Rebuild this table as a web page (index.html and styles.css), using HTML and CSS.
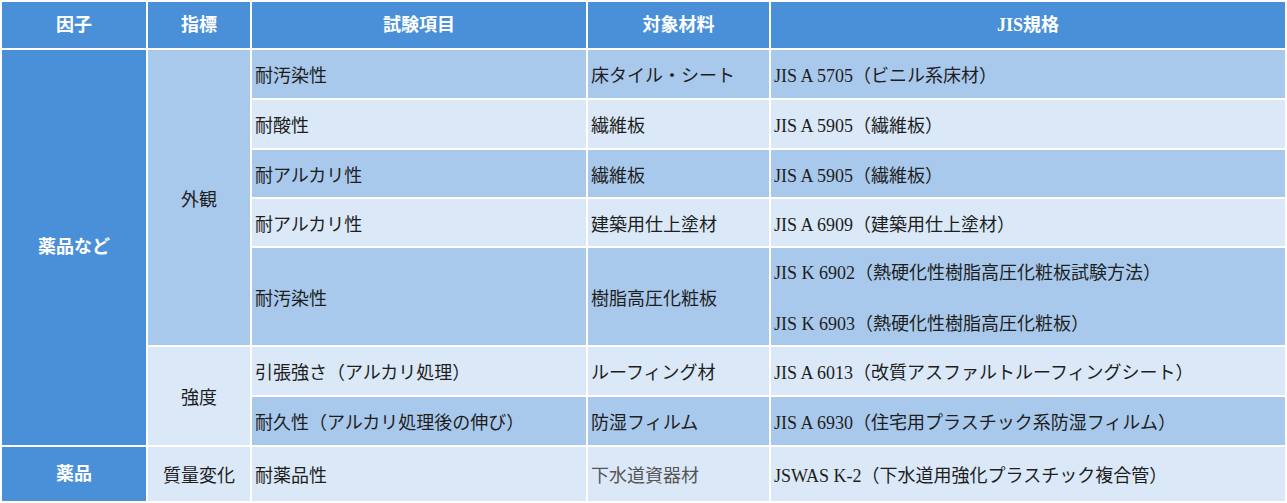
FILE: index.html
```html
<!DOCTYPE html>
<html lang="ja">
<head>
<meta charset="utf-8">
<title>JIS規格一覧</title>
<link rel="stylesheet" href="styles.css">
</head>
<body>
<table class="spec">
  <colgroup>
    <col class="c1">
    <col class="c2">
    <col class="c3">
    <col class="c4">
    <col class="c5">
  </colgroup>
  <thead>
    <tr class="h-head">
      <th>因子</th>
      <th>指標</th>
      <th>試験項目</th>
      <th>対象材料</th>
      <th>JIS規格</th>
    </tr>
  </thead>
  <tbody>
    <tr class="h48 mid">
      <td class="factor" rowspan="7">薬品など</td>
      <td class="index mid" rowspan="5">外観</td>
      <td>耐汚染性</td>
      <td>床タイル・シート</td>
      <td>JIS A 5705（ビニル系床材）</td>
    </tr>
    <tr class="h48 light">
      <td>耐酸性</td>
      <td>繊維板</td>
      <td>JIS A 5905（繊維板）</td>
    </tr>
    <tr class="h47 mid">
      <td>耐アルカリ性</td>
      <td>繊維板</td>
      <td>JIS A 5905（繊維板）</td>
    </tr>
    <tr class="h47 light">
      <td>耐アルカリ性</td>
      <td>建築用仕上塗材</td>
      <td>JIS A 6909（建築用仕上塗材）</td>
    </tr>
    <tr class="h97 mid">
      <td>耐汚染性</td>
      <td>樹脂高圧化粧板</td>
      <td>
        <div class="line">JIS K 6902（熱硬化性樹脂高圧化粧板試験方法）</div>
        <div class="line second">JIS K 6903（熱硬化性樹脂高圧化粧板）</div>
      </td>
    </tr>
    <tr class="h48 light">
      <td class="index light" rowspan="2">強度</td>
      <td>引張強さ（アルカリ処理）</td>
      <td>ルーフィング材</td>
      <td>JIS A 6013（改質アスファルトルーフィングシート）</td>
    </tr>
    <tr class="h48 mid">
      <td>耐久性（アルカリ処理後の伸び）</td>
      <td>防湿フィルム</td>
      <td>JIS A 6930（住宅用プラスチック系防湿フィルム）</td>
    </tr>
    <tr class="h54 light">
      <td class="factor">薬品</td>
      <td class="index">質量変化</td>
      <td>耐薬品性</td>
      <td class="muted">下水道資器材</td>
      <td>JSWAS K-2（下水道用強化プラスチック複合管）</td>
    </tr>
  </tbody>
</table>
</body>
</html>
```

FILE: styles.css
```css
html, body {
  margin: 0;
  padding: 0;
  background: #ffffff;
}

.spec {
  width: 1287px;
  table-layout: fixed;
  border-collapse: separate;
  border-spacing: 2px;
  font-family: "Liberation Serif", "Noto Sans CJK JP", sans-serif;
  font-size: 18px;
  line-height: 21px;
  color: #1e1e1e;
}

.c1 { width: 144px; }
.c2 { width: 102px; }
.c3 { width: 334px; }
.c4 { width: 181px; }
.c5 { width: 514px; }

.spec th,
.spec td {
  padding: 5px 3px 0 3px;
  vertical-align: middle;
  text-align: left;
  font-weight: 400;
}

.h-head { height: 46px; }
.h48 { height: 48px; }
.h47 { height: 47px; }
.h97 { height: 97px; }
.h54 { height: 54px; }

.spec th {
  background: #4a90d9;
  color: #ffffff;
  font-weight: 700;
  text-align: center;
  padding: 0;
}

.mid td { background: #a9c9ec; }
.light td { background: #dae8f7; }

.spec td.factor {
  background: #4a90d9;
  color: #ffffff;
  font-weight: 700;
  text-align: center;
  padding-top: 0;
}

.spec td.index {
  text-align: center;
}

.spec td.index.mid { background: #a9c9ec; }
.spec td.index.light { background: #dae8f7; }

.muted { color: #555555; }

.line.second { margin-top: 30px; }
```
